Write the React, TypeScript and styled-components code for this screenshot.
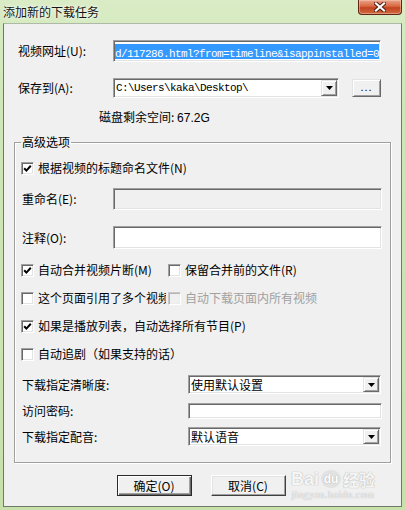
import React from "react";
import styled, { createGlobalStyle, css } from "styled-components";

const Global = createGlobalStyle`
  html, body { margin: 0; padding: 0; }
  body {
    width: 405px; height: 510px; overflow: hidden;
    background: #cde4b2;
    font-family: "Noto Sans CJK SC", "Liberation Sans", sans-serif;
    font-size: 12px; color: #000;
  }
  * { box-sizing: border-box; }
`;

const sunken = css`
  border: 1px solid;
  border-color: #a0a0a0 #ffffff #ffffff #a0a0a0;
  box-shadow: inset 1px 1px 0 #696969, inset -1px -1px 0 #e3e3e3;
`;

const raised = css`
  background: #f0f0f0;
  border: 1px solid;
  border-color: #e3e3e3 #696969 #696969 #e3e3e3;
  box-shadow: inset 1px 1px 0 #ffffff, inset -1px -1px 0 #a0a0a0;
`;

const Window = styled.div`
  position: relative;
  width: 405px; height: 510px;
  display: flex; flex-direction: column;
  overflow: hidden;
  background: linear-gradient(180deg, #d9ecc5 0%, #cfe6b6 20%, #c8e1ab 100%);
`;

const TitleBar = styled.div`
  height: 23px; flex: none;
  display: flex; justify-content: space-between; align-items: flex-start;
`;

const Title = styled.div`
  padding: 4px 0 0 3px;
  font-size: 12px; line-height: 15px;
  color: #141414;
  text-shadow: 0 0 5px rgba(255,255,255,0.95), 0 0 2px rgba(255,255,255,0.9);
`;

const CloseBtn = styled.div`
  width: 44px; height: 15px; margin-right: 3px;
  border: 1px solid #5e2518; border-top: none;
  border-radius: 0 0 4px 4px;
  background: linear-gradient(180deg, #e9a48c 0%, #d8673f 45%, #c24420 55%, #cf6a3e 100%);
  box-shadow: inset 0 0 0 1px rgba(255,210,190,0.45);
  display: flex; align-items: center; justify-content: center;
`;

const Client = styled.div`
  flex: 1;
  margin: 0 3px 3px;
  background: #f0f0f0;
  border: 1px solid #6d7a69;
  border-top-color: #aeb9a8;
  display: flex; flex-direction: column;
`;

const TopSection = styled.div`
  padding: 16px 0 0 14px;
  display: flex; flex-direction: column;
`;

const Row = styled.div<{ $h: number; $mt?: number }>`
  display: flex; align-items: center;
  height: ${(p) => p.$h}px;
  margin-top: ${(p) => p.$mt ?? 0}px;
  flex: none;
`;

const Label = styled.span<{ $w: number; $indent?: number }>`
  width: ${(p) => p.$w}px; flex: none;
  padding-left: ${(p) => p.$indent ?? 0}px;
  white-space: nowrap; line-height: 16px;
`;

const TextField = styled.div<{ $w: number; $disabled?: boolean }>`
  ${sunken};
  width: ${(p) => p.$w}px; height: 100%;
  background: ${(p) => (p.$disabled ? "#f0f0f0" : "#ffffff")};
  padding: 2px 1px 0 1px;
  overflow: hidden;
`;

const Mono = styled.span`
  font-family: "Liberation Mono", "DejaVu Sans Mono", monospace;
  font-size: 11px; letter-spacing: -0.6px;
  white-space: nowrap;
`;

const Selection = styled.div`
  background: #3399ff; color: #ffffff;
  height: 15px; line-height: 15px;
  margin-top: 1px;
  white-space: nowrap;
`;

const Combo = styled.div<{ $w: number }>`
  ${sunken};
  width: ${(p) => p.$w}px; height: 100%;
  background: #ffffff;
  padding: 1px;
  display: flex; align-items: stretch;
`;

const ComboText = styled.div`
  flex: 1; min-width: 0;
  display: flex; align-items: center;
  padding-left: 1px;
  line-height: 16px; white-space: nowrap;
`;

const DropBtn = styled.div`
  ${raised};
  width: 16px; flex: none;
  display: flex; align-items: center; justify-content: center;
`;

const SmallBtn = styled.div`
  ${raised};
  width: 29px; height: 18px; margin-left: 13px;
  display: flex; align-items: center; justify-content: center;
  font-family: "Liberation Sans", sans-serif; font-size: 11px; letter-spacing: 1px;
  padding-bottom: 3px;
`;

const DiskInfo = styled.div`
  margin: 12px 0 0 95px;
  height: 14px; line-height: 14px;
  white-space: nowrap;
`;

const Num = styled.span`
  font-family: "Liberation Sans", sans-serif; font-size: 12px;
`;

const Group = styled.fieldset`
  margin: 11px 10px 0 10px;
  padding: 9px 8px 16px 6px;
  min-width: 0;
  border: 1px solid #a0a0a0;
  box-shadow: 1px 1px 0 #ffffff, inset 1px 1px 0 #ffffff;
`;

const Legend = styled.legend`
  padding: 0 1px; margin: 0;
  line-height: 14px; font-size: 12px;
`;

const GroupBody = styled.div`
  display: flex; flex-direction: column;
`;

const CheckItem = styled.div<{ $w?: number; $clip?: boolean }>`
  display: flex; align-items: center; gap: 4px;
  width: ${(p) => (p.$w ? `${p.$w}px` : "auto")};
  flex: none;
  overflow: ${(p) => (p.$clip ? "hidden" : "visible")};
`;

const Box = styled.span<{ $disabled?: boolean }>`
  ${sunken};
  width: 13px; height: 13px; flex: none;
  background: ${(p) => (p.$disabled ? "#f0f0f0" : "#ffffff")};
  ${(p) =>
    p.$disabled &&
    css`
      border-color: #c8c8c8 #ffffff #ffffff #c8c8c8;
      box-shadow: inset 1px 1px 0 #b4b4b4, inset -1px -1px 0 #ececec;
    `}
  display: flex; align-items: center; justify-content: center;
`;

const CheckText = styled.span<{ $disabled?: boolean }>`
  white-space: nowrap; line-height: 16px;
  color: ${(p) => (p.$disabled ? "#a0a0a0" : "#000000")};
`;

const ButtonBar = styled.div`
  margin-top: 12px; padding-right: 3px;
  display: flex; justify-content: center; gap: 19px;
`;

const DlgButton = styled.div<{ $default?: boolean }>`
  width: 75px; height: 21px;
  display: flex; align-items: center; justify-content: center;
  line-height: 16px;
  background: #f0f0f0;
  border: 1px solid;
  border-color: ${(p) => (p.$default ? "#2a2a2a" : "#ffffff #404040 #404040 #ffffff")};
  box-shadow: ${(p) =>
    p.$default
      ? "inset 1px 1px 0 #ffffff, inset -1px -1px 0 #696969, inset -2px -2px 0 #a0a0a0"
      : "inset -1px -1px 0 #a0a0a0, inset 1px 1px 0 #e3e3e3"};
`;

const Watermark = styled.div`
  position: absolute; right: 30px; bottom: 9px;
  display: flex; flex-direction: column; align-items: center;
  color: rgba(255,255,255,0.9);
  text-shadow: 0 0 1px #b4b4b4, 0 0 1px #b4b4b4;
  pointer-events: none;
`;

const WmTop = styled.div`
  display: flex; align-items: center; gap: 2px;
  font-family: "Liberation Sans", sans-serif; font-weight: bold; font-size: 18px; line-height: 20px;
`;

const WmPaw = styled.span`
  display: inline-flex; align-items: center; justify-content: center;
  width: 20px; height: 18px; border-radius: 9px;
  background: rgba(220,220,220,0.7);
  font-size: 12px; color: #fff;
`;

const WmCn = styled.span`
  font-family: "Noto Sans CJK SC", sans-serif; font-size: 16px; font-weight: bold;
`;

const WmSub = styled.div`
  font-family: "Liberation Serif", serif; font-size: 10px; line-height: 12px; letter-spacing: 0.5px;
`;

const Spacer = styled.span<{ $w: number }>`
  width: ${(p) => p.$w}px; flex: none;
`;

const CheckMark = () => (
  <svg width="9" height="9" viewBox="0 0 9 9">
    <polyline points="1.2,4.2 3.4,6.6 7.8,1.8" fill="none" stroke="#000" strokeWidth="2" />
  </svg>
);

const Arrow = () => (
  <svg width="7" height="4" viewBox="0 0 7 4">
    <polygon points="0,0 7,0 3.5,4" fill="#000" />
  </svg>
);

const CloseX = () => (
  <svg width="12" height="10" viewBox="0 0 12 10">
    <path d="M2 1.5 L10 8.5 M10 1.5 L2 8.5" stroke="#4a1a10" strokeWidth="4" strokeLinecap="square" />
    <path d="M2 1.5 L10 8.5 M10 1.5 L2 8.5" stroke="#ffffff" strokeWidth="2.2" strokeLinecap="square" />
  </svg>
);

type CheckProps = { checked?: boolean; disabled?: boolean; label: string; w?: number; clip?: boolean };
const Check = ({ checked, disabled, label, w, clip }: CheckProps) => (
  <CheckItem $w={w} $clip={clip}>
    <Box $disabled={disabled}>{checked && <CheckMark />}</Box>
    <CheckText $disabled={disabled}>{label}</CheckText>
  </CheckItem>
);

export default function App() {
  return (
    <>
      <Global />
      <Window>
        <TitleBar>
          <Title>添加新的下载任务</Title>
          <CloseBtn>
            <CloseX />
          </CloseBtn>
        </TitleBar>
        <Client>
          <TopSection>
            <Row $h={22}>
              <Label $w={95}>视频网址(U):</Label>
              <TextField $w={268}>
                <Selection>
                  <Mono>d/117286.html?from=timeline&amp;isappinstalled=0</Mono>
                </Selection>
              </TextField>
            </Row>
            <Row $h={20} $mt={16}>
              <Label $w={95}>保存到(A):</Label>
              <Combo $w={226}>
                <ComboText>
                  <Mono>C:\Users\kaka\Desktop\</Mono>
                </ComboText>
                <DropBtn>
                  <Arrow />
                </DropBtn>
              </Combo>
              <SmallBtn>...</SmallBtn>
            </Row>
          </TopSection>
          <DiskInfo>
            磁盘剩余空间: <Num>67.2G</Num>
          </DiskInfo>
          <Group>
            <Legend>高级选项</Legend>
            <GroupBody>
              <Row $h={20}>
                <Check checked label="根据视频的标题命名文件(N)" />
              </Row>
              <Row $h={22} $mt={10}>
                <Label $w={92} $indent={1}>重命名(E):</Label>
                <TextField $w={269} $disabled />
              </Row>
              <Row $h={23} $mt={16}>
                <Label $w={92} $indent={1}>注释(O):</Label>
                <TextField $w={269} />
              </Row>
              <Row $h={20} $mt={11}>
                <Check checked w={147} label="自动合并视频片断(M)" />
                <Check label="保留合并前的文件(R)" />
              </Row>
              <Row $h={20} $mt={8}>
                <Check w={145} clip label="这个页面引用了多个视频" />
                <Spacer $w={2} />
                <Check disabled label="自动下载页面内所有视频" />
              </Row>
              <Row $h={20} $mt={8}>
                <Check checked label="如果是播放列表，自动选择所有节目(P)" />
              </Row>
              <Row $h={20} $mt={8}>
                <Check label="自动追剧（如果支持的话）" />
              </Row>
              <Row $h={19} $mt={11}>
                <Label $w={167} $indent={1}>下载指定清晰度:</Label>
                <Combo $w={193}>
                  <ComboText>使用默认设置</ComboText>
                  <DropBtn>
                    <Arrow />
                  </DropBtn>
                </Combo>
              </Row>
              <Row $h={16} $mt={9}>
                <Label $w={167} $indent={1}>访问密码:</Label>
                <TextField $w={194} />
              </Row>
              <Row $h={19} $mt={8}>
                <Label $w={167} $indent={1}>下载指定配音:</Label>
                <Combo $w={193}>
                  <ComboText>默认语音</ComboText>
                  <DropBtn>
                    <Arrow />
                  </DropBtn>
                </Combo>
              </Row>
            </GroupBody>
          </Group>
          <ButtonBar>
            <DlgButton $default>确定(O)</DlgButton>
            <DlgButton>取消(C)</DlgButton>
          </ButtonBar>
        </Client>
        <Watermark>
          <WmTop>
            Bai<WmPaw>du</WmPaw>
            <WmCn>经验</WmCn>
          </WmTop>
          <WmSub>jingyan.baidu.com</WmSub>
        </Watermark>
      </Window>
    </>
  );
}
